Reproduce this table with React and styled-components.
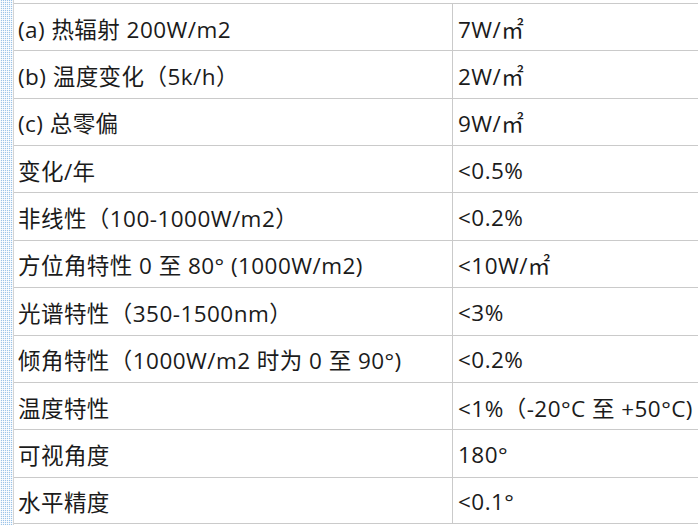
import React from "react";
import styled, { createGlobalStyle } from "styled-components";

const Global = createGlobalStyle`
  html, body { margin: 0; padding: 0; background: #fff; overflow: hidden; }
  body { font-family: "Open Sans", "Noto Sans CJK SC", sans-serif; }
`;

const Page = styled.div`
  display: flex;
  width: 698px;
  height: 525px;
  overflow: hidden;
  background: #fff;
`;

const Strip = styled.div`
  flex: 0 0 13px;
  border-right: 1px solid #d4d4d4;
  background-color: #fff;
  background-image:
    linear-gradient(90deg, rgba(255,255,255,0.85) 1px, transparent 1px),
    linear-gradient(0deg, rgba(255,255,255,0.85) 1px, transparent 1px),
    linear-gradient(#9cc4e8, #9cc4e8);
  background-size: 2px 2px, 2px 2px, 100% 100%;
`;

const Sheet = styled.div`
  flex: 0 0 auto;
  width: 760px;
  padding-top: 3px;
`;

const Row = styled.div`
  display: grid;
  grid-template-columns: 438px 1fr;
  height: 47.36px;
  box-sizing: border-box;
  border-top: 1px solid #cacaca;
  &:last-child { border-bottom: 1px solid #cacaca; }
`;

const Cell = styled.div`
  display: flex;
  align-items: center;
  padding-left: ${(p) => p.$pad}px;
  padding-top: 2px;
  font-size: 22.5px;
  letter-spacing: 0.45px;
  color: #1b1b1b;
  white-space: nowrap;
  border-left: ${(p) => (p.$divider ? "1px solid #cacaca" : "none")};
`;

const rows = [
  ["(a) 热辐射 200W/m2", "7W/㎡"],
  ["(b) 温度变化（5k/h）", "2W/㎡"],
  ["(c) 总零偏", "9W/㎡"],
  ["变化/年", "<0.5%"],
  ["非线性（100-1000W/m2）", "<0.2%"],
  ["方位角特性 0 至 80° (1000W/m2)", "<10W/㎡"],
  ["光谱特性（350-1500nm）", "<3%"],
  ["倾角特性（1000W/m2 时为 0 至 90°)", "<0.2%"],
  ["温度特性", "<1%（-20°C 至 +50°C)"],
  ["可视角度", "180°"],
  ["水平精度", "<0.1°"],
];

export default function App() {
  return (
    <>
      <Global />
      <Page>
        <Strip />
        <Sheet>
          {rows.map(([a, b], i) => (
            <Row key={i}>
              <Cell $pad={4}>{a}</Cell>
              <Cell $pad={5} $divider>{b}</Cell>
            </Row>
          ))}
        </Sheet>
      </Page>
    </>
  );
}
